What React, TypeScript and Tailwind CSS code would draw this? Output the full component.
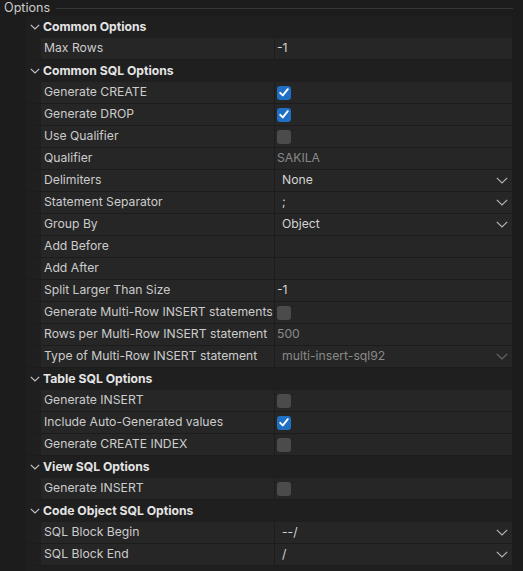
import React from "react";

type Row =
  | { kind: "group"; title: string }
  | { kind: "text"; label: string; value: string; dim?: boolean }
  | { kind: "check"; label: string; checked: boolean }
  | { kind: "select"; label: string; value: string; dim?: boolean };

const rows: Row[] = [
  { kind: "group", title: "Common Options" },
  { kind: "text", label: "Max Rows", value: "-1" },
  { kind: "group", title: "Common SQL Options" },
  { kind: "check", label: "Generate CREATE", checked: true },
  { kind: "check", label: "Generate DROP", checked: true },
  { kind: "check", label: "Use Qualifier", checked: false },
  { kind: "text", label: "Qualifier", value: "SAKILA", dim: true },
  { kind: "select", label: "Delimiters", value: "None" },
  { kind: "select", label: "Statement Separator", value: ";" },
  { kind: "select", label: "Group By", value: "Object" },
  { kind: "text", label: "Add Before", value: "" },
  { kind: "text", label: "Add After", value: "" },
  { kind: "text", label: "Split Larger Than Size", value: "-1" },
  { kind: "check", label: "Generate Multi-Row INSERT statements", checked: false },
  { kind: "text", label: "Rows per Multi-Row INSERT statement", value: "500", dim: true },
  { kind: "select", label: "Type of Multi-Row INSERT statement", value: "multi-insert-sql92", dim: true },
  { kind: "group", title: "Table SQL Options" },
  { kind: "check", label: "Generate INSERT", checked: false },
  { kind: "check", label: "Include Auto-Generated values", checked: true },
  { kind: "check", label: "Generate CREATE INDEX", checked: false },
  { kind: "group", title: "View SQL Options" },
  { kind: "check", label: "Generate INSERT", checked: false },
  { kind: "group", title: "Code Object SQL Options" },
  { kind: "select", label: "SQL Block Begin", value: "--/" },
  { kind: "select", label: "SQL Block End", value: "/" },
];

function GroupChevron() {
  return (
    <svg width="10" height="6" viewBox="0 0 10 6" className="block">
      <path d="M0.8 0.8 L5 5 L9.2 0.8" fill="none" stroke="#c8c8c8" strokeWidth="1.1" />
    </svg>
  );
}

function SelectChevron({ dim }: { dim?: boolean }) {
  return (
    <svg width="12" height="7" viewBox="0 0 12 7" className="block">
      <path d="M0.8 0.8 L6 6 L11.2 0.8" fill="none" stroke={dim ? "#6a6a6a" : "#b4b4b4"} strokeWidth="1.2" />
    </svg>
  );
}

function Checkbox({ checked }: { checked: boolean }) {
  if (checked) {
    return (
      <div className="w-[14px] h-[14px] rounded-[3px] bg-[#1f6fc5] flex items-center justify-center">
        <svg width="10" height="9" viewBox="0 0 10 9">
          <path d="M1.2 4.8 L3.8 7.4 L8.8 1.2" fill="none" stroke="#ffffff" strokeWidth="1.9" strokeLinecap="round" strokeLinejoin="round" />
        </svg>
      </div>
    );
  }
  return <div className="w-[14px] h-[14px] rounded-[3px] bg-[#4b4b4b]" />;
}

function PropRow({ row }: { row: Exclude<Row, { kind: "group" }> }) {
  return (
    <div className="flex h-[22px] border-b border-[#1c1c1c]">
      <div className="w-[15px] shrink-0 bg-[#1f1f1f]" />
      <div className="w-[233px] shrink-0 bg-[#262626] pl-[3px] flex items-center text-[#cccccc] whitespace-nowrap overflow-hidden">
        {row.label}
      </div>
      <div className="flex-1 bg-[#262626] border-l border-[#1c1c1c] flex items-center min-w-0">
        {row.kind === "text" && (
          <span className={`pl-[2px] ${row.dim ? "text-[#8a8a8a]" : "text-[#d4d4d4]"}`}>{row.value}</span>
        )}
        {row.kind === "check" && (
          <div className="pl-[2px]">
            <Checkbox checked={row.checked} />
          </div>
        )}
        {row.kind === "select" && (
          <div className="flex-1 flex items-center justify-between pl-[7px] pr-[4px]">
            <span className={row.dim ? "text-[#8a8a8a]" : "text-[#d4d4d4]"}>{row.value}</span>
            <SelectChevron dim={row.dim} />
          </div>
        )}
      </div>
    </div>
  );
}

export default function App() {
  return (
    <div
      className="w-[523px] h-[571px] bg-[#1c1c1c] overflow-hidden text-[12.2px] leading-none"
      style={{ fontFamily: "Inter, 'Noto Sans', sans-serif" }}
    >
      <div className="flex items-center h-[16px] pr-[10px]">
        <span className="pl-[4px] pr-[6px] text-[#cccccc] text-[12.6px]">Options</span>
        <div className="flex-1 h-[1px] bg-[#363636]" />
      </div>
      <div className="ml-[26px] mr-[11px] bg-[#1f1f1f] h-[560px]">
        {rows.map((row, i) =>
          row.kind === "group" ? (
            <div key={i} className="flex items-center h-[22px]">
              <div className="pl-[4px] w-[17px] shrink-0">
                <GroupChevron />
              </div>
              <span className="font-bold text-[#e4e4e4]">{row.title}</span>
            </div>
          ) : (
            <PropRow key={i} row={row} />
          )
        )}
      </div>
    </div>
  );
}
